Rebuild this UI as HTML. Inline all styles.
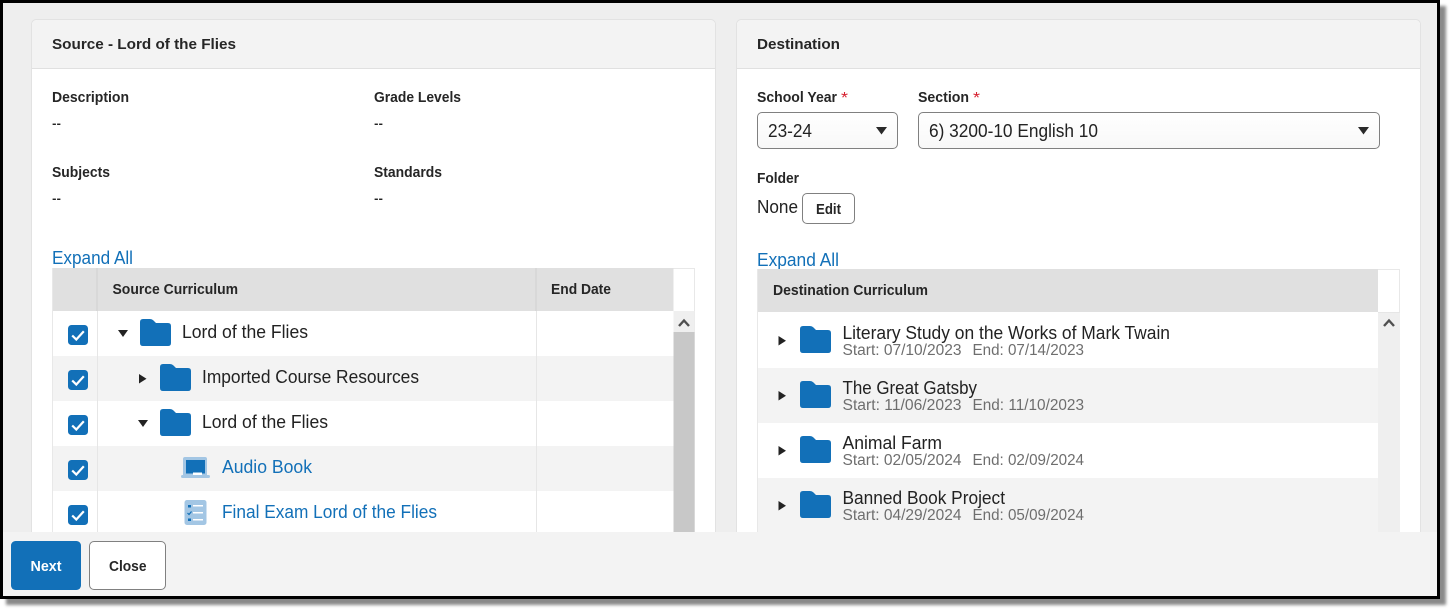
<!DOCTYPE html>
<html lang="en"><head><meta charset="utf-8"><title>Copy Curriculum</title>
<style>
html,body{margin:0;padding:0;background:#fff;width:1455px;height:614px;overflow:hidden}
#frame{position:absolute;left:0;top:0;width:1440px;height:599px;background:#000;box-shadow:6px 6px 3px #8a8a8a}
svg{position:absolute;left:0;top:0;display:block}
text{font-family:"Liberation Sans",sans-serif;fill:#222}
.b{font-weight:700;font-size:15.2px;fill:#262626}
.t{font-size:18.8px;fill:#222}
.l{font-size:18.8px;fill:#1270b8}
.d{font-size:15.4px;fill:#6e6e6e}
.s{font-size:18px;fill:#222}
</style></head><body>
<div id="frame"></div>
<svg width="1455" height="614" viewBox="0 0 1455 614" xmlns="http://www.w3.org/2000/svg">
<defs>
<path id="f" d="M3 0H10Q12 0 13.5 1.5L16 4H28Q31 4 31 7V24Q31 27 28 27H3Q0 27 0 24V3Q0 0 3 0Z" fill="#1270b8"/>
<g id="c"><rect width="20" height="20" rx="3.5" fill="#1270b8"/><path d="M4.200 10.500L8.300 14.500L15.800 6.300" fill="none" stroke="#fff" stroke-width="2.200"/></g>
<path id="dn" d="M0 0H10L5 7Z" fill="#222"/>
<path id="rt" d="M0 0L7.5 4.7L0 9.5Z" fill="#222"/>
<linearGradient id="sg" x1="0" y1="0" x2="0" y2="1"><stop offset="0" stop-color="#fff"/><stop offset="1" stop-color="#f8f8f8"/></linearGradient>
</defs>
<rect x="3" y="3" width="1434" height="593" fill="#eee"/>

<!-- Left card -->
<rect x="31.5" y="19.5" width="684" height="540" rx="5" fill="#fff" stroke="#e2e2e2"/>
<path d="M32 68V25Q32 20 37 20H710Q715 20 715 25V68Z" fill="#f3f3f3"/>
<rect x="32" y="68" width="683" height="1" fill="#e0e0e0"/>
<text class="b" x="52" y="49" textLength="184" lengthAdjust="spacingAndGlyphs">Source - Lord of the Flies</text>
<text class="b" x="52" y="102" textLength="77" lengthAdjust="spacingAndGlyphs">Description</text>
<text class="b" x="374" y="102" textLength="87" lengthAdjust="spacingAndGlyphs">Grade Levels</text>
<text class="s" x="52" y="129" textLength="9" lengthAdjust="spacingAndGlyphs">--</text>
<text class="s" x="374" y="129" textLength="9" lengthAdjust="spacingAndGlyphs">--</text>
<text class="b" x="52" y="177" textLength="58" lengthAdjust="spacingAndGlyphs">Subjects</text>
<text class="b" x="374" y="177" textLength="68" lengthAdjust="spacingAndGlyphs">Standards</text>
<text class="s" x="52" y="204" textLength="9" lengthAdjust="spacingAndGlyphs">--</text>
<text class="s" x="374" y="204" textLength="9" lengthAdjust="spacingAndGlyphs">--</text>
<text class="l" x="52" y="264" textLength="81" lengthAdjust="spacingAndGlyphs">Expand All</text>

<!-- Left table -->
<rect x="52.5" y="268.5" width="642" height="270" fill="#fff" stroke="#e8e8e8"/>
<rect x="53" y="268" width="620.500" height="43" fill="#e0e0e0"/>
<rect x="96.500" y="268" width="1" height="43" fill="#cfcfcf"/>
<rect x="535.500" y="268" width="1" height="43" fill="#cfcfcf"/>
<rect x="53" y="356" width="620.500" height="45" fill="#f3f3f3"/>
<rect x="53" y="446" width="620.500" height="45" fill="#f3f3f3"/>
<rect x="97" y="311" width="1" height="225" fill="#e6e6e6"/>
<rect x="536" y="311" width="1" height="225" fill="#e6e6e6"/>
<rect x="673.500" y="311" width="21" height="21" fill="#efefef"/>
<rect x="673.500" y="332" width="21" height="204" fill="#c8c8c8"/>
<path d="M679 326L684 320.500L689 326" fill="none" stroke="#505050" stroke-width="2.400"/>
<text class="b" x="112.500" y="294" textLength="125.500" lengthAdjust="spacingAndGlyphs">Source Curriculum</text>
<text class="b" x="551" y="294" textLength="60" lengthAdjust="spacingAndGlyphs">End Date</text>

<use href="#c" x="68" y="325"/><use href="#c" x="68" y="370"/><use href="#c" x="68" y="415"/><use href="#c" x="68" y="460"/><use href="#c" x="68" y="505"/>
<use href="#dn" x="118" y="330"/><use href="#f" x="140" y="319"/>
<text class="t" x="182" y="338" textLength="126" lengthAdjust="spacingAndGlyphs">Lord of the Flies</text>
<use href="#rt" x="139" y="374"/><use href="#f" x="160" y="364"/>
<text class="t" x="202" y="383" textLength="217" lengthAdjust="spacingAndGlyphs">Imported Course Resources</text>
<use href="#dn" x="138" y="420"/><use href="#f" x="160" y="409"/>
<text class="t" x="202" y="428" textLength="126" lengthAdjust="spacingAndGlyphs">Lord of the Flies</text>
<rect x="183" y="457" width="24" height="20" rx="2" fill="#a3c6e4"/>
<rect x="181" y="475" width="29" height="3" rx="1.500" fill="#a3c6e4"/>
<rect x="186" y="460" width="19" height="13.500" fill="#1270b8"/>
<rect x="193" y="472.500" width="9" height="2.500" fill="#fff"/>
<text class="l" x="222" y="473" textLength="90" lengthAdjust="spacingAndGlyphs">Audio Book</text>
<rect x="184.500" y="500" width="22" height="25" rx="2.500" fill="#a3c6e4"/>
<rect x="188" y="505" width="3" height="2.500" fill="#1270b8"/>
<path d="M187.500 513L189 514.500L191.500 511.500" fill="none" stroke="#1270b8" stroke-width="1.200"/>
<rect x="188" y="518.500" width="3" height="2.500" fill="#1270b8"/>
<rect x="193" y="505" width="10" height="1.500" fill="#fff"/><rect x="193" y="512" width="10" height="1.500" fill="#fff"/><rect x="193" y="519" width="10" height="1.500" fill="#fff"/>
<text class="l" x="222" y="518" textLength="215" lengthAdjust="spacingAndGlyphs">Final Exam Lord of the Flies</text>

<!-- Right card -->
<rect x="736.500" y="19.500" width="684" height="540" rx="5" fill="#fff" stroke="#e2e2e2"/>
<path d="M737 68V25Q737 20 742 20H1415Q1420 20 1420 25V68Z" fill="#f3f3f3"/>
<rect x="737" y="68" width="683" height="1" fill="#e0e0e0"/>
<text class="b" x="757" y="49" textLength="83" lengthAdjust="spacingAndGlyphs">Destination</text>
<text class="b" x="757" y="102" textLength="80" lengthAdjust="spacingAndGlyphs">School Year</text>
<text x="841" y="103" style="font-size:16px;fill:#d6202f" textLength="7" lengthAdjust="spacingAndGlyphs">*</text>
<text class="b" x="918" y="102" textLength="51" lengthAdjust="spacingAndGlyphs">Section</text>
<text x="973" y="103" style="font-size:16px;fill:#d6202f" textLength="7" lengthAdjust="spacingAndGlyphs">*</text>
<rect x="757.500" y="112.500" width="140" height="36" rx="4.500" fill="url(#sg)" stroke="#808080"/>
<text class="s" x="768" y="137" textLength="44" lengthAdjust="spacingAndGlyphs">23-24</text>
<path d="M876 127H887L881.500 134.500Z" fill="#2a2a2a"/>
<rect x="918.500" y="112.500" width="461" height="36" rx="4.500" fill="url(#sg)" stroke="#808080"/>
<text class="s" x="929" y="137" textLength="169" lengthAdjust="spacingAndGlyphs">6) 3200-10 English 10</text>
<path d="M1358 127H1369L1363.500 134.500Z" fill="#2a2a2a"/>
<text class="b" x="757" y="183" textLength="42" lengthAdjust="spacingAndGlyphs">Folder</text>
<text class="t" x="757" y="213" textLength="41" lengthAdjust="spacingAndGlyphs">None</text>
<rect x="802.500" y="193.500" width="52" height="30" rx="4.500" fill="#fff" stroke="#808080"/>
<text class="b" x="816" y="214" textLength="25" lengthAdjust="spacingAndGlyphs">Edit</text>
<text class="l" x="757" y="266" textLength="82" lengthAdjust="spacingAndGlyphs">Expand All</text>

<!-- Right table -->
<rect x="757.500" y="269.500" width="642" height="270" fill="#fff" stroke="#e8e8e8"/>
<rect x="758" y="269" width="620" height="43" fill="#e0e0e0"/>
<rect x="758" y="368" width="620" height="55" fill="#f3f3f3"/>
<rect x="758" y="478" width="620" height="55" fill="#f3f3f3"/>
<rect x="1378" y="312" width="22" height="226" fill="#efefef"/>
<rect x="1378" y="312" width="22" height="1" fill="#e6e6e6"/>
<path d="M1384 326L1389 320.500L1394 326" fill="none" stroke="#505050" stroke-width="2.400"/>
<text class="b" x="773" y="295" textLength="155" lengthAdjust="spacingAndGlyphs">Destination Curriculum</text>

<use href="#rt" x="778.500" y="336"/><use href="#f" x="800" y="326"/>
<text class="t" x="842.500" y="339" textLength="327.500" lengthAdjust="spacingAndGlyphs">Literary Study on the Works of Mark Twain</text>
<text class="d" x="842.500" y="355" textLength="119" lengthAdjust="spacingAndGlyphs">Start: 07/10/2023</text>
<text class="d" x="972.500" y="355" textLength="111.500" lengthAdjust="spacingAndGlyphs">End: 07/14/2023</text>

<use href="#rt" x="778.500" y="391"/><use href="#f" x="800" y="381"/>
<text class="t" x="842.500" y="394" textLength="134.500" lengthAdjust="spacingAndGlyphs">The Great Gatsby</text>
<text class="d" x="842.500" y="410" textLength="119" lengthAdjust="spacingAndGlyphs">Start: 11/06/2023</text>
<text class="d" x="972.500" y="410" textLength="111.500" lengthAdjust="spacingAndGlyphs">End: 11/10/2023</text>

<use href="#rt" x="778.500" y="446"/><use href="#f" x="800" y="436"/>
<text class="t" x="842.500" y="449" textLength="99.500" lengthAdjust="spacingAndGlyphs">Animal Farm</text>
<text class="d" x="842.500" y="465" textLength="119" lengthAdjust="spacingAndGlyphs">Start: 02/05/2024</text>
<text class="d" x="972.500" y="465" textLength="111.500" lengthAdjust="spacingAndGlyphs">End: 02/09/2024</text>

<use href="#rt" x="778.500" y="501"/><use href="#f" x="800" y="491"/>
<text class="t" x="842.500" y="504" textLength="162.500" lengthAdjust="spacingAndGlyphs">Banned Book Project</text>
<text class="d" x="842.500" y="520" textLength="119" lengthAdjust="spacingAndGlyphs">Start: 04/29/2024</text>
<text class="d" x="972.500" y="520" textLength="111.500" lengthAdjust="spacingAndGlyphs">End: 05/09/2024</text>

<!-- Footer -->
<rect x="3" y="532" width="1434" height="64" fill="#f3f3f3"/>
<rect x="11" y="541" width="70" height="49" rx="4.500" fill="#1270b8"/>
<text class="b" style="fill:#fff" x="30.500" y="571" textLength="31" lengthAdjust="spacingAndGlyphs">Next</text>
<rect x="89.500" y="541.500" width="76" height="48" rx="4.500" fill="#fff" stroke="#808080"/>
<text class="b" x="109" y="571" textLength="37.500" lengthAdjust="spacingAndGlyphs">Close</text>
</svg>
</body></html>
